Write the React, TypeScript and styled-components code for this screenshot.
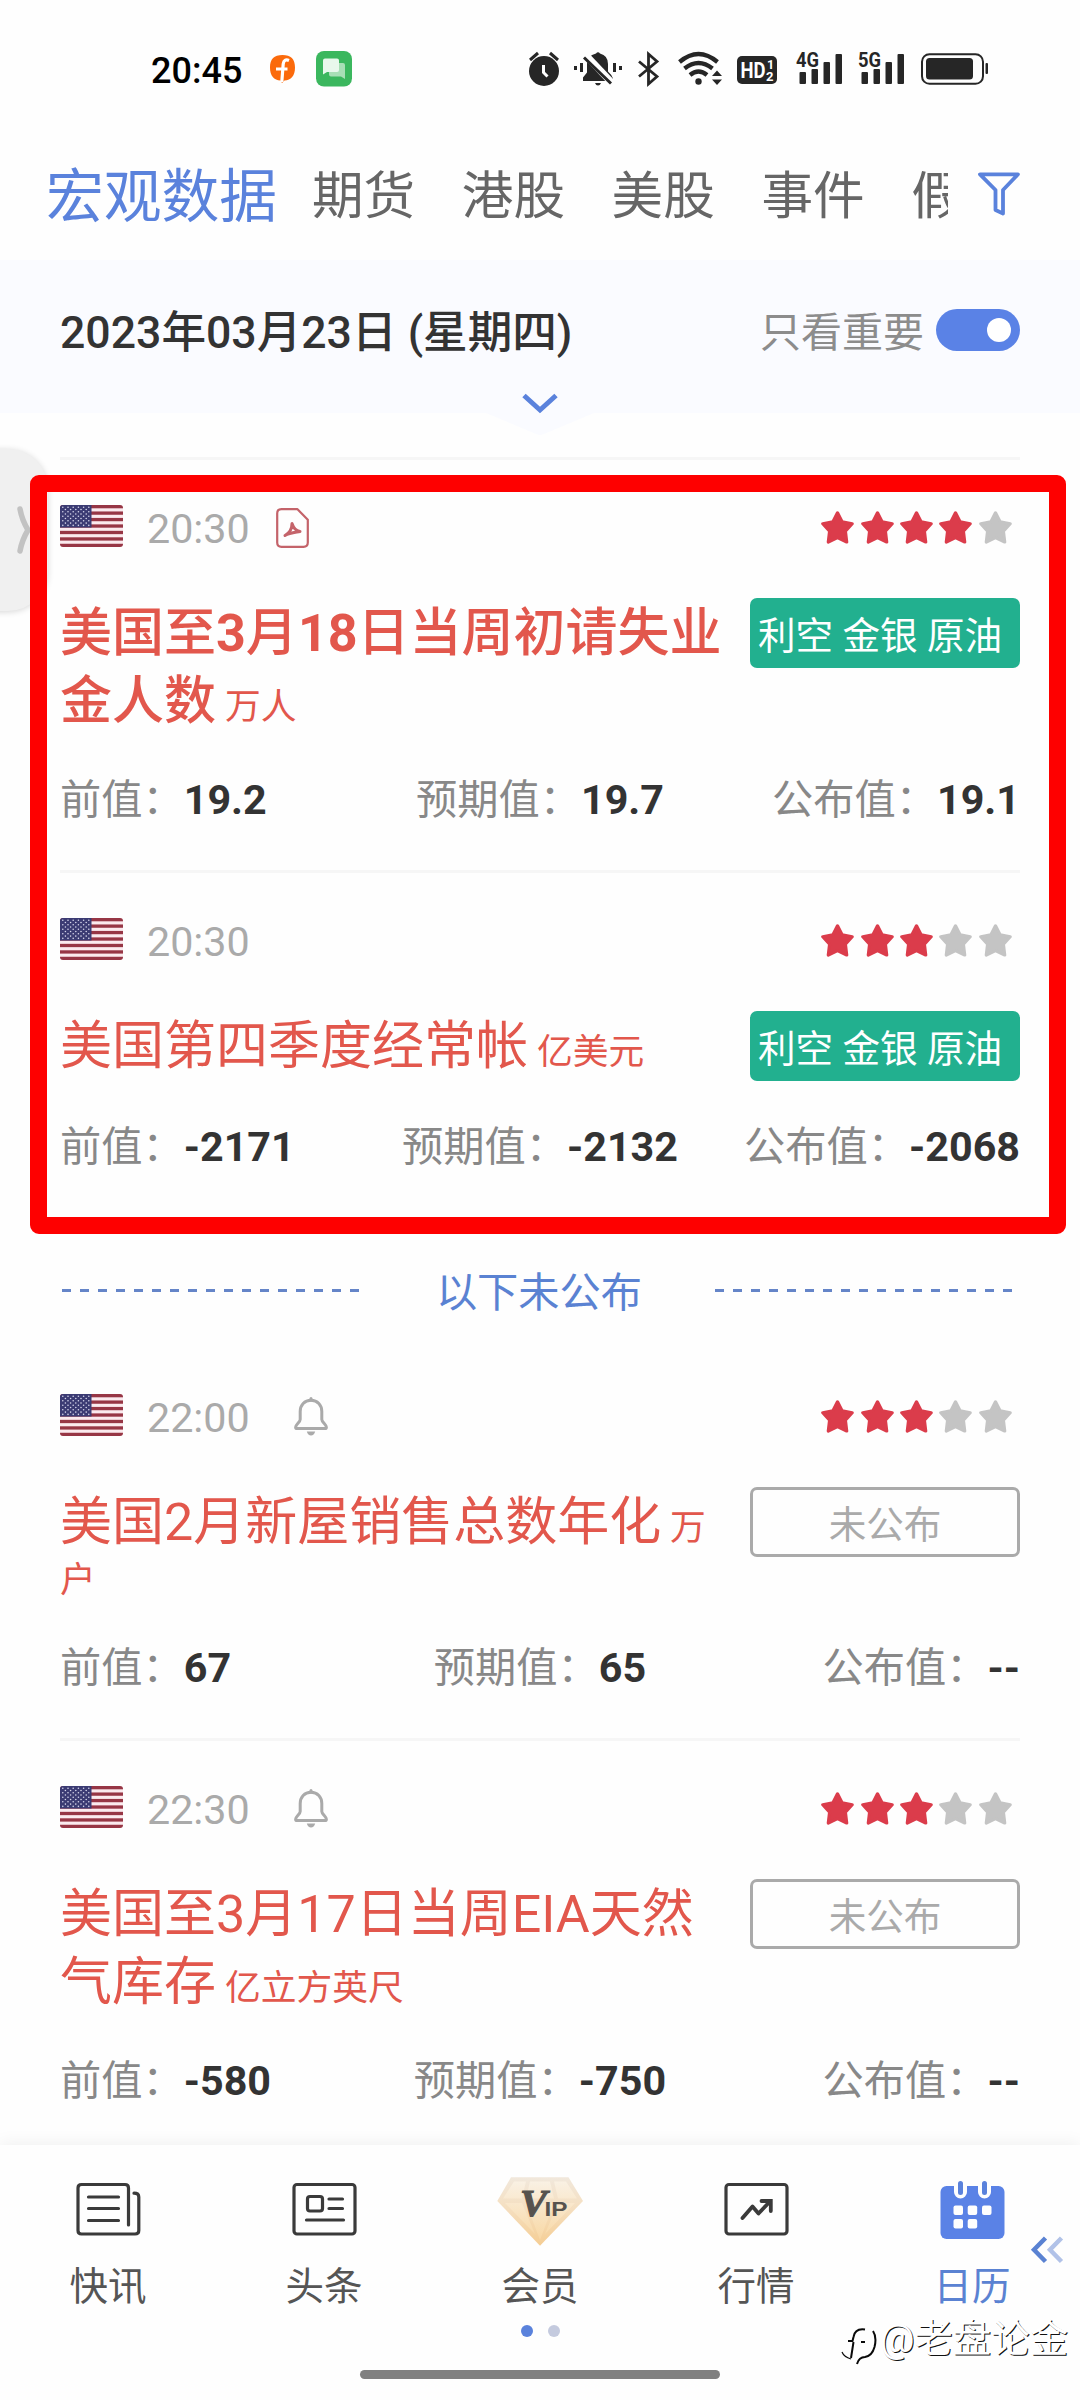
import React from 'react';
import styled, { createGlobalStyle } from 'styled-components';

const GlobalStyle = createGlobalStyle`
  * { box-sizing: border-box; }
  body {
    margin: 0;
    background: #fefefe;
    font-family: Roboto, "Noto Sans CJK SC", sans-serif;
  }
`;

const Screen = styled.div`
  position: relative;
  display: flex;
  flex-direction: column;
  width: 1080px;
  height: 2400px;
  overflow: hidden;
  background: #fefefe;
`;

/* ---------- status bar ---------- */

const StatusBar = styled.div`
  display: flex;
  align-items: center;
  flex: none;
  height: 138px;
  padding: 0 92px 0 151px;
`;

const Clock = styled.span`
  width: 119px;
  font-size: 36px;
  font-weight: 500;
  line-height: 42px;
  padding-top: 3px;
  color: #000;
`;

const StatusIcon = styled.svg<{ $gap?: number }>`
  flex: none;
  display: block;
  overflow: visible;
  margin-left: ${(p) => p.$gap ?? 0}px;
`;

const Spacer = styled.div`
  flex: 1;
`;

/* ---------- tabs ---------- */

const TabBar = styled.nav`
  display: flex;
  align-items: center;
  flex: none;
  height: 122px;
  padding: 0 60px 10px 0;
`;

const TabList = styled.div`
  flex: none;
  display: flex;
  align-items: center;
  width: 948px;
  padding: 5px 0 0 46px;
  overflow: hidden;
  white-space: nowrap;
`;

const Tab = styled.span<{ $active?: boolean }>`
  flex: none;
  font-size: ${(p) => (p.$active ? 57.75 : 51.6)}px;
  line-height: 80px;
  color: ${(p) => (p.$active ? '#5a82dc' : '#666')};
  margin-right: ${(p) => (p.$active ? 35 : 46.6)}px;
`;

const FilterIcon = styled.svg`
  display: block;
  margin-left: auto;
`;

/* ---------- date header ---------- */

const DateHeader = styled.header`
  display: flex;
  flex: none;
  flex-direction: column;
  height: 153px;
  padding: 44px 60px 0;
  background: #fafbff;
`;

const DateRow = styled.div`
  display: flex;
  align-items: center;
  height: 52px;
`;

const DateText = styled.span`
  font-size: 44.6px;
  font-weight: 500;
  line-height: 60px;
  padding-top: 5px;
  color: #333;
`;

const FilterLabel = styled.span`
  margin-left: auto;
  margin-right: 12px;
  padding-top: 5px;
  font-size: 41px;
  line-height: 50px;
  color: #8c8c8c;
`;

const Toggle = styled.span`
  display: flex;
  align-items: center;
  justify-content: flex-end;
  width: 84px;
  height: 42px;
  padding-right: 9px;
  border-radius: 21px;
  background: #5a82e6;
`;

const Knob = styled.span`
  width: 24px;
  height: 24px;
  border-radius: 50%;
  background: #fff;
`;

/* ---------- list ---------- */

const List = styled.main`
  flex: 1;
  min-height: 0;
  padding: 44px 60px 0;
`;

const Divider = styled.hr`
  height: 3px;
  margin: 0;
  border: 0;
  background: #f6f6f6;
`;

const Item = styled.article`
  padding: 45px 0;
`;

const MetaRow = styled.div`
  display: flex;
  align-items: center;
  height: 42px;
`;

const Time = styled.time`
  margin-left: 24px;
  padding-top: 5px;
  font-size: 41.25px;
  line-height: 42px;
  color: #aaa;
`;

const MetaIcon = styled.svg<{ $gap: number }>`
  display: block;
  margin: 3px 0 0 ${(p) => p.$gap}px;
`;

const StarRow = styled.div`
  display: flex;
  gap: 6.3px;
  margin: 3px 8.5px 0 auto;
`;

const HeadRow = styled.div`
  display: flex;
  justify-content: space-between;
  align-items: flex-start;
  margin-top: 51px;
`;

const Title = styled.h2`
  width: 672px;
  margin: 2px 0 -2px;
  font-size: 35.75px;
  font-weight: 400;
  line-height: 47px;
  color: #e2574c;
`;

const TitleMain = styled.span<{ $strong?: boolean }>`
  font-size: 52px;
  font-weight: ${(p) => (p.$strong ? 500 : 400)};
  line-height: 68px;
  b { font-weight: 700; }
`;

const Badge = styled.span<{ $pending?: boolean }>`
  flex: none;
  display: flex;
  align-items: center;
  justify-content: ${(p) => (p.$pending ? 'center' : 'flex-start')};
  width: 270px;
  height: 70px;
  padding: 5px 0 0 ${(p) => (p.$pending ? 0 : 8)}px;
  border: ${(p) => (p.$pending ? '3px solid #aaa' : '0')};
  border-radius: 7px;
  background: ${(p) => (p.$pending ? 'transparent' : '#22b08f')};
  color: ${(p) => (p.$pending ? '#aaa' : '#fff')};
  font-size: 37.6px;
  line-height: 50px;
  white-space: nowrap;
`;

const ValueRow = styled.div`
  display: grid;
  grid-template-columns: 1fr auto 1fr;
  margin-top: 41px;
  line-height: 50px;
  font-size: 41.25px;
  color: #888;
`;

const Value = styled.span`
  white-space: nowrap;
  &:last-child { justify-self: end; }
  b { font-weight: 700; color: #333; }
`;

const PendingRow = styled.div`
  display: flex;
  align-items: center;
  justify-content: space-between;
  height: 50px;
  margin: 50px 0 32px;
  padding: 0 8px 0 2px;
`;

const PendingText = styled.span`
  padding: 2px 0 0 4px;
  font-size: 41.25px;
  line-height: 50px;
  color: #5a82d2;
`;

const Dashes = styled.i`
  width: 297px;
  height: 3px;
  margin-bottom: 4px;
  background: repeating-linear-gradient(90deg, #6585c8 0 9px, transparent 9px 18px);
`;

/* ---------- bottom navigation ---------- */

const BottomNav = styled.footer`
  position: relative;
  flex: none;
  display: flex;
  flex-direction: column;
  align-items: center;
  height: 255px;
  background: #fefefe;
  box-shadow: 0 -2px 16px rgba(0, 0, 0, 0.06);
`;

const NavRow = styled.div`
  display: flex;
  width: 100%;
  height: 180px;
  padding-top: 26px;
`;

const NavItem = styled.div<{ $active?: boolean }>`
  display: flex;
  flex: 1;
  flex-direction: column;
  align-items: center;
  color: ${(p) => (p.$active ? '#5a82d2' : '#555')};
  font-size: 38.5px;
  line-height: 50px;
  svg { display: block; margin-bottom: 23px; }
`;

const VipSlot = styled.div`
  height: 91px;
  padding-top: 4px;
`;

const Dots = styled.div`
  display: flex;
  gap: 15px;
  height: 12px;
`;

const Dot = styled.i<{ $on?: boolean }>`
  width: 12px;
  height: 12px;
  border-radius: 50%;
  background: ${(p) => (p.$on ? '#5a82dc' : '#c4cade')};
`;

const HomeBar = styled.div`
  width: 360px;
  height: 9px;
  margin-top: 33px;
  border-radius: 5px;
  background: #808080;
`;

/* ---------- overlays ---------- */

const SideHandle = styled.div`
  position: absolute;
  left: -60px;
  top: 449px;
  display: flex;
  align-items: center;
  justify-content: flex-end;
  width: 108px;
  height: 162px;
  padding: 0 17px 0 0;
  border-radius: 0 40px 40px 0;
  background: #f0f0f0;
  box-shadow: 0 1px 6px rgba(0, 0, 0, 0.16);
`;

const RedFrame = styled.div`
  position: absolute;
  left: 30px;
  top: 475px;
  width: 1035.5px;
  height: 758.5px;
  border: 17px solid #fe0000;
  border-radius: 9px;
`;

const Collapse = styled.svg`
  position: absolute;
  left: 1030px;
  top: 2235px;
`;

const Watermark = styled.div`
  position: absolute;
  left: 839px;
  top: 2309px;
  display: flex;
  align-items: center;
  color: #fff;
  font-size: 38.4px;
  line-height: 54px;
  white-space: nowrap;
  text-shadow: 1px 1px 0.6px #111;
  svg { display: block; margin: 14px 2px 0 0; }
`;

const HeaderNotch = styled.svg`
  position: absolute;
  left: 486px;
  top: 413px;
`;

const ExpandArrow = styled.svg`
  position: absolute;
  left: 522px;
  top: 393px;
`;

/* ---------- drawings ---------- */

const Flag = () => (
  <svg width="63" height="42" viewBox="0 0 63 42">
    <defs>
      <clipPath id="flagClip"><rect width="63" height="42" rx="3" /></clipPath>
    </defs>
    <g clipPath="url(#flagClip)">
      <rect width="63" height="42" fill="#fbeaee" />
      {[0, 1, 2, 3, 4, 5, 6].map((i) => (
        <rect key={i} y={i * 6.46} width="63" height="3.3" fill="#973645" />
      ))}
      <rect width="31.5" height="22.5" fill="#3b3b73" />
      {[0, 1, 2, 3, 4, 5, 6, 7, 8].map((r) =>
        (r % 2 ? [0, 1, 2, 3, 4] : [0, 1, 2, 3, 4, 5]).map((c) => (
          <circle key={`${r}-${c}`} cx={2.8 + c * 5.2 + (r % 2 ? 2.6 : 0)} cy={2.2 + r * 2.27} r="0.8" fill="#d5d5ea" />
        )),
      )}
    </g>
  </svg>
);

const Star = ({ on }: { on: boolean }) => (
  <svg width="33" height="33" viewBox="0 0 33 33">
    <path
      d="M16.5 1.8 21.2 10.9 31.2 12.7 24.4 20.2 25.7 31 16.5 26.6 7.3 31 8.6 20.2 1.8 12.7 11.8 10.9Z"
      fill={on ? '#db3c4b' : '#c4c4c4'}
      stroke={on ? '#db3c4b' : '#c4c4c4'}
      strokeWidth="3.2"
      strokeLinejoin="round"
    />
  </svg>
);

const PdfIcon = () => (
  <MetaIcon $gap={26} width="33" height="40" viewBox="0 0 33 40" fill="none" stroke="#c4636a" strokeWidth="2.2" strokeLinejoin="round" strokeLinecap="round">
    <path d="M5.5 1.2H21.5L31.8 11.8V34.5Q31.8 38.8 27.5 38.8H5.5Q1.2 38.8 1.2 34.5V5.5Q1.2 1.2 5.5 1.2Z" />
    <path d="M9 27.5C13.5 25 16 20 16 15.5C17.5 20 20 23 24 23.5C19 24.5 13.5 25 9 27.5Z" strokeWidth="3" />
  </MetaIcon>
);

const BellIcon = () => (
  <MetaIcon $gap={44} width="34" height="39" viewBox="0 0 34 39" fill="none" stroke="#aaa" strokeWidth="3" strokeLinejoin="round">
    <path d="M17 3.2C10.5 3.2 6.2 8 6.2 14.5V22.5C6.2 25 1.6 27.5 1.6 30.2Q1.6 31.6 3.2 31.6H30.8Q32.4 31.6 32.4 30.2C32.4 27.5 27.8 25 27.8 22.5V14.5C27.8 8 23.5 3.2 17 3.2Z" />
    <path d="M17 1.5V3.2" strokeLinecap="round" />
    <path d="M12.8 34.6H21.2Q20 38.6 17 38.6T12.8 34.6Z" fill="#aaa" stroke="none" />
  </MetaIcon>
);

const Signal = ({ label, gap }: { label: string; gap: number }) => (
  <StatusIcon $gap={gap} width="47" height="36" viewBox="0 0 47 36" fill="#262626">
    <text x="0" y="16" fontSize="20.5" fontWeight="700" textLength="23" lengthAdjust="spacingAndGlyphs">{label}</text>
    <rect x="3.5" y="21" width="6.5" height="12" rx="1" />
    <rect x="15.5" y="18" width="6.5" height="15" rx="1" />
    <rect x="27.5" y="11" width="6.5" height="22" rx="1" />
    <rect x="39.5" y="3" width="6.5" height="30" rx="1" />
  </StatusIcon>
);

const StatusIcons = () => (
  <>
    <StatusIcon width="30" height="36" viewBox="0 0 30 36">
      <path d="M1 9 9 2M29 9 21 2" stroke="#262626" strokeWidth="3" />
      <circle cx="15" cy="20" r="15" fill="#262626" />
      <path d="M14.5 14V21.5L18.5 25.5" stroke="#fff" strokeWidth="3" fill="none" />
    </StatusIcon>
    <StatusIcon $gap={15} width="48" height="36" viewBox="0 0 48 36" fill="#262626">
      <path d="M22 2.5Q24 0 26 2.5Q34 4.5 34 13V20.5Q38 24 39 27.5V30H9V26.5L13 21.5V13Q13 4.5 22 2.5Z" />
      <path d="M21 32H27Q26 34.5 24 34.5T21 32Z" />
      <path d="M13 5.5 39 33" stroke="#fefefe" strokeWidth="7" />
      <path d="M10 6.5 37 32.5" stroke="#262626" strokeWidth="3" />
      <path d="M0 15H3V19H0ZM6 12H9V21H6ZM39 12H42V21H39ZM45 15H48V19H45Z" />
    </StatusIcon>
    <StatusIcon $gap={16} width="21" height="36" viewBox="0 0 21 36" fill="none" stroke="#262626" strokeWidth="2.8">
      <path d="M1 10.5 19 25.5 10.5 33V3L19 10.5 1 25.5" />
    </StatusIcon>
    <StatusIcon $gap={19} width="44" height="36" viewBox="0 0 44 36" fill="none" stroke="#262626" strokeWidth="4.3">
      <path d="M1.5 11Q20.5 -5 39.5 11M6.5 17.5Q20.5 6.5 34.5 17.5M12 24Q20.5 17 29 24" />
      <circle cx="20.5" cy="30.5" r="3.2" fill="#262626" stroke="none" />
      <path d="M34 25 39 19.5 44 25ZM34 28.5H44L39 34Z" fill="#262626" stroke="none" />
    </StatusIcon>
    <StatusIcon $gap={15} width="40" height="36" viewBox="0 0 40 36" fill="#fff">
      <rect y="5" width="40" height="28" rx="5" fill="#262626" />
      <text x="3.5" y="27" fontSize="21.5" fontWeight="700" textLength="25" lengthAdjust="spacingAndGlyphs">HD</text>
      <text x="30" y="17.5" fontSize="12.5" fontWeight="700">1</text>
      <text x="29" y="30" fontSize="13" fontWeight="700">2</text>
    </StatusIcon>
    <Signal label="4G" gap={19} />
    <Signal label="5G" gap={15} />
    <StatusIcon $gap={16} width="67" height="36" viewBox="0 0 67 36">
      <rect x="1" y="3.2" width="61" height="29.6" rx="7.5" fill="none" stroke="#262626" strokeWidth="2" />
      <rect x="5" y="7" width="47" height="21.5" rx="3.5" fill="#262626" />
      <rect x="64.5" y="12" width="2.5" height="11" rx="1" fill="#262626" />
    </StatusIcon>
  </>
);

const NewsIcon = () => (
  <svg width="65" height="68" viewBox="0 0 65 68" fill="none" stroke="#3a3a3a" strokeWidth="3.2" strokeLinecap="round">
    <path d="M52.5 54V17Q52.5 13.5 49 13.5H5.5Q2 13.5 2 17V59.5Q2 63 5.5 63H59Q62.8 63 62.8 59.5V26Q62.8 22.2 58 22.2" />
    <path d="M12.5 26H42.5M12.5 37.5H42.5M12.5 49.5H42.5" />
  </svg>
);

const HeadlineIcon = () => (
  <svg width="65" height="68" viewBox="0 0 65 68" fill="none" stroke="#3a3a3a" strokeWidth="3.2" strokeLinecap="round">
    <rect x="2" y="13.5" width="61" height="49.5" rx="3" />
    <rect x="15.5" y="25.5" width="15" height="14.5" rx="2.5" />
    <path d="M37 28H50.5M37 37.5H50.5M14.5 49H51.5" />
  </svg>
);

const VipIcon = () => (
  <svg width="88" height="72" viewBox="6 10 88 72">
    <defs>
      <linearGradient id="gem" x1="0" y1="0" x2="0" y2="1">
        <stop offset="0" stopColor="#f1e8dc" />
        <stop offset="0.45" stopColor="#f5dfc0" />
        <stop offset="1" stopColor="#f5cd93" />
      </linearGradient>
      <linearGradient id="facet" x1="0" y1="0" x2="0" y2="1">
        <stop offset="0" stopColor="#fbf3e6" />
        <stop offset="1" stopColor="#f9d9a6" />
      </linearGradient>
    </defs>
    <path d="M21 12.3H78.5L93 36 50 80.7 7.3 36Z" fill="url(#gem)" />
    <path d="M24 16.5H36L32 33.5H13ZM40 16.5H60L64 33.5H36ZM64 16.5H76L87 33.5H68ZM15 38H32L45 69ZM36 38H64L50 75ZM68 38H85L55 69Z" fill="url(#facet)" opacity="0.8" />
    <g fill="#57534e" fontWeight="700">
      <text x="30" y="51" fontFamily="Liberation Serif, serif" fontStyle="italic" fontSize="38" textLength="27" lengthAdjust="spacingAndGlyphs" stroke="#57534e" strokeWidth="1.2">V</text>
      <text x="54.5" y="51" fontSize="19.5" textLength="23" lengthAdjust="spacingAndGlyphs" fontFamily="Liberation Sans, sans-serif">IP</text>
    </g>
  </svg>
);

const MarketIcon = () => (
  <svg width="65" height="68" viewBox="0 0 65 68" fill="none" stroke="#3a3a3a" strokeWidth="3.2" strokeLinecap="round">
    <rect x="2" y="13.5" width="61" height="49.5" rx="3" />
    <path d="M18.5 47 28.5 35.5 34.5 42.5 46 30.5" strokeWidth="3.8" strokeLinejoin="round" />
    <path d="M37.5 30H46.8V40" strokeWidth="3.8" strokeLinejoin="miter" />
  </svg>
);

const CalendarIcon = () => (
  <svg width="65" height="68" viewBox="0 0 65 68">
    <rect x="0.5" y="15" width="64" height="53" rx="6" fill="#5a82e6" />
    <path d="M20.5 15V21M44.5 15V21" stroke="#fefefe" strokeWidth="13" strokeLinecap="round" />
    <path d="M20.5 12.5V21.500M44.5 12.5V21.5" stroke="#5a82dc" strokeWidth="5" strokeLinecap="round" />
    {[[13.5, 34.5], [27.7, 34.5], [42, 34.5], [13.5, 48], [27.7, 48]].map(([x, y]) => (
      <rect key={`${x}-${y}`} x={x} y={y} width="9.5" height="9.5" rx="2" fill="#fefefe" />
    ))}
  </svg>
);

/* ---------- data ---------- */

type Entry = {
  time: string;
  icon?: 'pdf' | 'bell';
  stars: number;
  title: React.ReactNode;
  strong?: boolean;
  unit: string;
  pending?: boolean;
  values: [string, string, string];
};

const published: Entry[] = [
  {
    time: '20:30',
    icon: 'pdf',
    stars: 4,
    title: <>美国至<b>3</b>月<b>18</b>日当周初请失业金人数</>,
    strong: true,
    unit: '万人',
    values: ['19.2', '19.7', '19.1'],
  },
  { time: '20:30', stars: 3, title: '美国第四季度经常帐', unit: '亿美元', values: ['-2171', '-2132', '-2068'] },
];

const upcoming: Entry[] = [
  { time: '22:00', icon: 'bell', stars: 3, title: '美国2月新屋销售总数年化', unit: '万户', pending: true, values: ['67', '65', '--'] },
  { time: '22:30', icon: 'bell', stars: 3, title: '美国至3月17日当周EIA天然气库存', unit: '亿立方英尺', pending: true, values: ['-580', '-750', '--'] },
];

const labels = ['前值', '预期值', '公布值'];

const EntryView = ({ entry }: { entry: Entry }) => (
  <Item>
    <MetaRow>
      <Flag />
      <Time>{entry.time}</Time>
      {entry.icon === 'pdf' && <PdfIcon />}
      {entry.icon === 'bell' && <BellIcon />}
      <StarRow>
        {[0, 1, 2, 3, 4].map((i) => <Star key={i} on={i < entry.stars} />)}
      </StarRow>
    </MetaRow>
    <HeadRow>
      <Title>
        <TitleMain $strong={entry.strong}>{entry.title}</TitleMain> {entry.unit}
      </Title>
      <Badge $pending={entry.pending}>{entry.pending ? '未公布' : '利空 金银 原油'}</Badge>
    </HeadRow>
    <ValueRow>
      {entry.values.map((v, i) => (
        <Value key={labels[i]}>{labels[i]}：<b>{v}</b></Value>
      ))}
    </ValueRow>
  </Item>
);

export default function App() {
  return (
    <>
      <GlobalStyle />
      <Screen>
        <StatusBar>
          <Clock>20:45</Clock>
          <StatusIcon width="25" height="36" viewBox="0 0 25 36">
            <path d="M12.5 4C4 4 0 8 0 16.5S4 29 10.5 29.5L12 32 14.5 29.5C21 29 25 25 25 16.5S21 4 12.5 4Z" fill="#fb6a0b" />
            <path d="M19 9.5Q14 7.5 13.2 13L11.8 31M6 18H17.5" fill="none" stroke="#fff" strokeWidth="3.2" />
          </StatusIcon>
          <StatusIcon $gap={21} width="36" height="36" viewBox="0 0 36 36">
            <rect width="36" height="35.5" rx="8" fill="#3bb75e" />
            <path d="M15 12H27Q29 12 29 14V28L25 25.5H15Q13 25.5 13 23.5V14Q13 12 15 12Z" fill="#a8dfb6" />
            <path d="M9 7.5H21Q23 7.5 23 9.5V19Q23 21 21 21H11L7 23.5V9.5Q7 7.5 9 7.5Z" fill="#e8f8ec" />
          </StatusIcon>
          <Spacer />
          <StatusIcons />
        </StatusBar>

        <TabBar>
          <TabList>
            <Tab $active>宏观数据</Tab>
            <Tab>期货</Tab>
            <Tab>港股</Tab>
            <Tab>美股</Tab>
            <Tab>事件</Tab>
            <Tab>假期</Tab>
          </TabList>
          <FilterIcon width="42" height="44" viewBox="0 0 42 44" fill="none" stroke="#5a82dc" strokeWidth="3.8" strokeLinejoin="round">
            <path d="M2 2.3H40L25 18V41.5L17.5 38V18Z" />
          </FilterIcon>
        </TabBar>

        <DateHeader>
          <DateRow>
            <DateText>2023年03月23日 (星期四)</DateText>
            <FilterLabel>只看重要</FilterLabel>
            <Toggle><Knob /></Toggle>
          </DateRow>
        </DateHeader>
        <HeaderNotch width="108" height="24" viewBox="0 0 108 24">
          <path d="M0 0H108L58 21Q54 23 50 21Z" fill="#fafbff" />
        </HeaderNotch>
        <ExpandArrow width="36" height="22" viewBox="0 0 36 22" fill="none" stroke="#5a82dc" strokeWidth="5">
          <path d="M2 2.5 18 17 34 2.5" />
        </ExpandArrow>

        <List>
          <Divider />
          <EntryView entry={published[0]} />
          <Divider />
          <EntryView entry={published[1]} />
          <PendingRow>
            <Dashes />
            <PendingText>以下未公布</PendingText>
            <Dashes />
          </PendingRow>
          <EntryView entry={upcoming[0]} />
          <Divider />
          <EntryView entry={upcoming[1]} />
        </List>

        <BottomNav>
          <NavRow>
            <NavItem><NewsIcon />快讯</NavItem>
            <NavItem><HeadlineIcon />头条</NavItem>
            <NavItem><VipSlot><VipIcon /></VipSlot>会员</NavItem>
            <NavItem><MarketIcon />行情</NavItem>
            <NavItem $active><CalendarIcon />日历</NavItem>
          </NavRow>
          <Dots><Dot $on /><Dot /></Dots>
          <HomeBar />
        </BottomNav>

        <SideHandle>
          <svg width="14" height="48" viewBox="0 0 14 48" fill="none" stroke="#c2c2c2" strokeWidth="5.5" strokeLinecap="round" strokeLinejoin="round">
            <path d="M3 3Q5 14 11 24Q5 34 3 45" />
          </svg>
        </SideHandle>
        <RedFrame />
        <Collapse width="34" height="30" viewBox="0 0 34 30" fill="none" strokeWidth="4.5">
          <path d="M15.5 3 4 14.8 15.5 26.5" stroke="#5a82d2" />
          <path d="M31.5 3 20 14.8 31.5 26.5" stroke="#b1c2e8" />
        </Collapse>
        <Watermark>
          <svg width="39" height="46" viewBox="0 0 39 46" fill="none">
            <g stroke="#0a0a0a" strokeWidth="2">
              <path d="M34 8Q38 14 35.5 24Q33 33 26 34Q20 34 18 41" />
              <path d="M26 6.5Q16 5 14.5 14L13.5 18H9M14.5 19L12 35M22 19H26" />
              <path d="M3 29Q5 34 12 36" strokeWidth="1.2" />
            </g>
          </svg>
          @老盘论金
        </Watermark>
      </Screen>
    </>
  );
}
